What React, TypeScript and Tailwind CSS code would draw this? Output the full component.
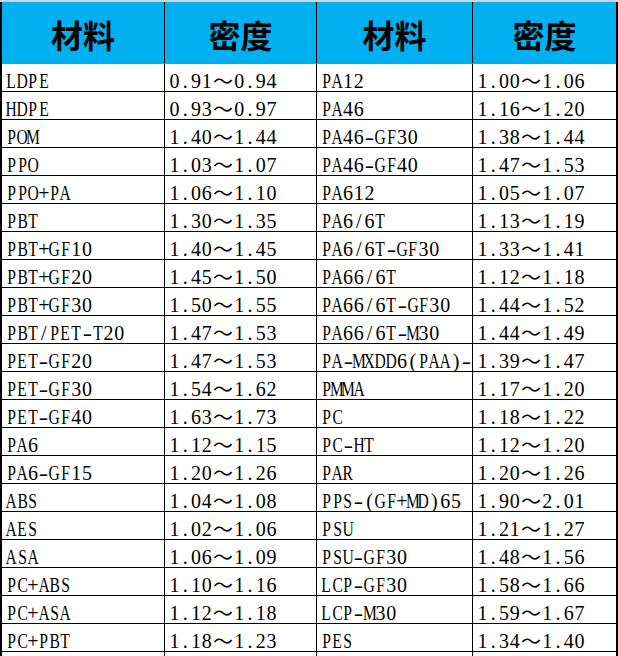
const left: [string, string, string][] = [
  ['LDPE', '0.91', '0.94'],
  ['HDPE', '0.93', '0.97'],
  ['POM', '1.40', '1.44'],
  ['PPO', '1.03', '1.07'],
  ['PPO+PA', '1.06', '1.10'],
  ['PBT', '1.30', '1.35'],
  ['PBT+GF10', '1.40', '1.45'],
  ['PBT+GF20', '1.45', '1.50'],
  ['PBT+GF30', '1.50', '1.55'],
  ['PBT/PET-T20', '1.47', '1.53'],
  ['PET-GF20', '1.47', '1.53'],
  ['PET-GF30', '1.54', '1.62'],
  ['PET-GF40', '1.63', '1.73'],
  ['PA6', '1.12', '1.15'],
  ['PA6-GF15', '1.20', '1.26'],
  ['ABS', '1.04', '1.08'],
  ['AES', '1.02', '1.06'],
  ['ASA', '1.06', '1.09'],
  ['PC+ABS', '1.10', '1.16'],
  ['PC+ASA', '1.12', '1.18'],
  ['PC+PBT', '1.18', '1.23'],
];

const right: [string, string, string][] = [
  ['PA12', '1.00', '1.06'],
  ['PA46', '1.16', '1.20'],
  ['PA46-GF30', '1.38', '1.44'],
  ['PA46-GF40', '1.47', '1.53'],
  ['PA612', '1.05', '1.07'],
  ['PA6/6T', '1.13', '1.19'],
  ['PA6/6T-GF30', '1.33', '1.41'],
  ['PA66/6T', '1.12', '1.18'],
  ['PA66/6T-GF30', '1.44', '1.52'],
  ['PA66/6T-M30', '1.44', '1.49'],
  ['PA-MXDD6(PAA)-GF', '1.39', '1.47'],
  ['PMMA', '1.17', '1.20'],
  ['PC', '1.18', '1.22'],
  ['PC-HT', '1.12', '1.20'],
  ['PAR', '1.20', '1.26'],
  ['PPS-(GF+MD)65', '1.90', '2.01'],
  ['PSU', '1.21', '1.27'],
  ['PSU-GF30', '1.48', '1.56'],
  ['LCP-GF30', '1.58', '1.66'],
  ['LCP-M30', '1.59', '1.67'],
  ['PES', '1.34', '1.40'],
];

const cell = 'h-full flex items-end pl-[4px] overflow-hidden whitespace-nowrap leading-[20px]';

// SimSun-style half-width cells: every ASCII char sits in a 10.8px slot,
// capitals squeezed so the serif face stays inside its slot.
function glyphClass(ch: string) {
  if (/[A-Z]/.test(ch)) return 'shrink-0 scale-x-[0.78]';
  if (ch === '-') return 'shrink-0 scale-x-[1.4]';
  return 'shrink-0';
}

function Mono({ text }: { text: string }) {
  return (
    <span className="inline-flex">
      {text.split('').map((ch, i) => (
        <span key={i} className="inline-flex w-[10.8px] justify-center">
          <span className={glyphClass(ch)}>{ch}</span>
        </span>
      ))}
    </span>
  );
}

function Range({ lo, hi }: { lo: string; hi: string }) {
  return (
    <span className="inline-flex">
      <Mono text={lo} />
      <span
        className="inline-flex w-[21.6px] justify-center"
        style={{ fontFamily: '"Noto Sans CJK SC", sans-serif' }}
      >
        ～
      </span>
      <Mono text={hi} />
    </span>
  );
}

export default function App() {
  return (
    <div className="w-[618px] h-[656px] overflow-hidden bg-white text-black">
      <div className="h-[2px] bg-[#d4d4d4]" />
      <div className="border-x-2 border-black">
        {/* header */}
        <div
          className="flex h-[62px] bg-[#00b0f0] border-b border-[#3fae49] text-[32px] font-bold"
          style={{ fontFamily: '"Noto Sans CJK SC", sans-serif' }}
        >
          <div className="w-[163px] border-r border-black flex items-center justify-center pt-[3px]">材料</div>
          <div className="w-[152px] border-r border-black flex items-center justify-center pt-[3px]">密度</div>
          <div className="w-[156px] border-r border-black flex items-center justify-center pt-[3px]">材料</div>
          <div className="w-[143px] flex items-center justify-center pt-[3px]">密度</div>
        </div>
        {/* rows */}
        <div
          className="text-[20px]"
          style={{ fontFamily: '"Liberation Serif", "Noto Sans CJK SC", serif' }}
        >
          {left.map((l, i) => {
            const r = right[i];
            return (
              <div key={l[0]} className="flex h-[28px] border-b border-black">
                <div className={`w-[163px] border-r border-black ${cell}`}>
                  <Mono text={l[0]} />
                </div>
                <div className={`w-[152px] border-r border-black ${cell}`}>
                  <Range lo={l[1]} hi={l[2]} />
                </div>
                <div className={`w-[156px] border-r border-black ${cell}`}>
                  <Mono text={r[0]} />
                </div>
                <div className={`w-[143px] ${cell}`}>
                  <Range lo={r[1]} hi={r[2]} />
                </div>
              </div>
            );
          })}
          <div className="flex h-[28px]">
            <div className="w-[163px] border-r border-black" />
            <div className="w-[152px] border-r border-black" />
            <div className="w-[156px] border-r border-black" />
            <div className="w-[143px]" />
          </div>
        </div>
      </div>
    </div>
  );
}
